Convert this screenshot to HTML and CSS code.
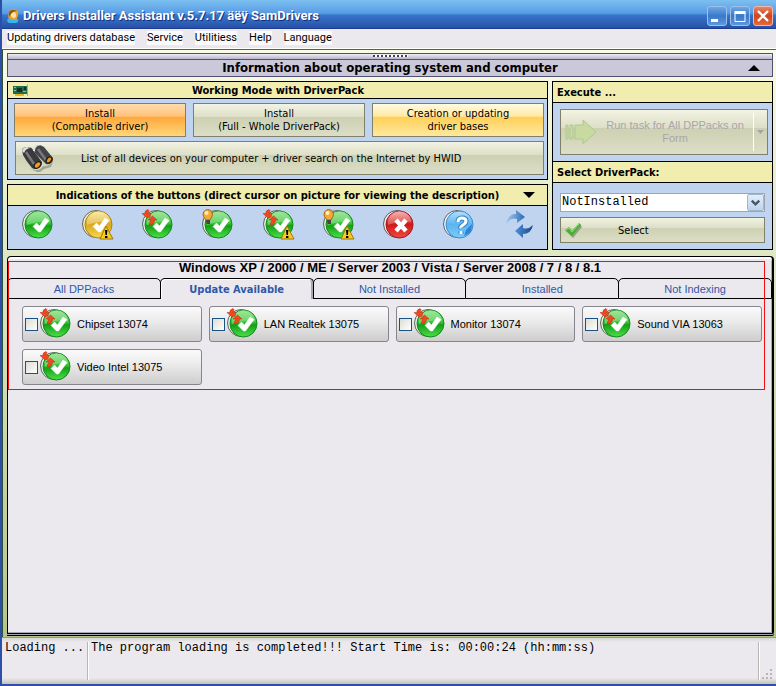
FILE: index.html
```html
<!DOCTYPE html>
<html lang="en">
<head>
    <meta charset="UTF-8">
    <meta name="viewport" content="width=device-width, initial-scale=1.0">
    <title>Drivers Installer Assistant</title>
    <link rel="stylesheet" href="styles.css">
</head>
<body>

<!-- shared icons -->
<svg class="defs" width="0" height="0">
    <defs>
        <linearGradient id="gGreen" x1="0" y1="0" x2="0" y2="1">
            <stop offset="0" stop-color="#7fe07a"/>
            <stop offset="0.45" stop-color="#3cc43a"/>
            <stop offset="0.55" stop-color="#12a016"/>
            <stop offset="1" stop-color="#4ee04a"/>
        </linearGradient>
        <linearGradient id="gGold" x1="0" y1="0" x2="0" y2="1">
            <stop offset="0" stop-color="#f7e27c"/>
            <stop offset="0.5" stop-color="#d9a91c"/>
            <stop offset="1" stop-color="#f5d850"/>
        </linearGradient>
        <linearGradient id="gRed" x1="0" y1="0" x2="0" y2="1">
            <stop offset="0" stop-color="#f49a94"/>
            <stop offset="0.5" stop-color="#cf1a1a"/>
            <stop offset="1" stop-color="#f04a40"/>
        </linearGradient>
        <linearGradient id="gBlue" x1="0" y1="0" x2="0" y2="1">
            <stop offset="0" stop-color="#b4e0fa"/>
            <stop offset="0.5" stop-color="#5cb4f0"/>
            <stop offset="1" stop-color="#7cccfa"/>
        </linearGradient>
        <linearGradient id="gArrowRight" x1="0" y1="0" x2="1" y2="0">
            <stop offset="0" stop-color="#a4cdf0"/>
            <stop offset="1" stop-color="#2a68b4"/>
        </linearGradient>
        <linearGradient id="gArrowLeft" x1="0" y1="0" x2="1" y2="0">
            <stop offset="0" stop-color="#4c90d8"/>
            <stop offset="1" stop-color="#1c4888"/>
        </linearGradient>
        <symbol id="ball-green" viewBox="0 0 32 32">
            <circle cx="14" cy="15" r="13.5" fill="#e4ece4" stroke="#5a6a5c"/>
            <circle cx="16.5" cy="15.5" r="13.5" fill="url(#gGreen)" stroke="#118a18"/>
            <path d="M5 14a11.5 11.5 0 0 1 23-1Q18 11 5 16z" fill="#fff" opacity=".25"/>
        </symbol>
        <symbol id="tick" viewBox="0 0 32 32">
            <path d="M11 17.500l3.500-3.500 3 3L23 9l4 2.500L18.500 23h-2z" fill="#fff" stroke="#fff" stroke-width=".5"/>
        </symbol>
        <symbol id="warn" viewBox="0 0 32 32">
            <path d="M24 17l7 13H18z" fill="#f6cc22" stroke="#a07808"/>
            <path d="M23 21h2.400l-.5 5h-1.400zM23 27h2.400v2H23z" fill="#000"/>
        </symbol>
        <symbol id="redo" viewBox="0 0 32 32">
            <path d="M5 9L0 4.500h3Q2 2 6 .5l1 1-1 3 3-.5-1 4z" fill="#f4481c" stroke="#b02c10" stroke-width=".5"/>
            <path d="M10.500 7l4.500 4-2.500 0q0 4-4.500 5l-1-1 2-4-3 0z" fill="#f4481c" stroke="#b02c10" stroke-width=".5"/>
        </symbol>
        <symbol id="bulb" viewBox="0 0 32 32">
            <path d="M5.500 .5a5 5 0 0 1 4.500 7L8 11H4L1.500 7.500A5 5 0 0 1 5.500 .5z" fill="#f4a838" stroke="#a8641c"/>
            <path d="M4 11h4v4H4.500z" fill="#444"/>
            <circle cx="4.500" cy="4" r="2" fill="#fff0b0"/>
        </symbol>
        <symbol id="ok" viewBox="0 0 32 32"><use href="#ball-green"/><use href="#tick"/></symbol>
        <symbol id="ok-update" viewBox="0 0 32 32"><use href="#ok"/><use href="#redo"/></symbol>
        <symbol id="ok-bulb" viewBox="0 0 32 32"><use href="#ok"/><use href="#bulb"/></symbol>
        <symbol id="ok-update-warn" viewBox="0 0 32 32"><use href="#ok-update"/><use href="#warn"/></symbol>
        <symbol id="ok-bulb-warn" viewBox="0 0 32 32"><use href="#ok-bulb"/><use href="#warn"/></symbol>
        <symbol id="gold-warn" viewBox="0 0 32 32">
            <circle cx="14" cy="15" r="13.5" fill="#f0ead0" stroke="#6a6450"/>
            <circle cx="16.500" cy="15.500" r="13.500" fill="url(#gGold)" stroke="#b08410"/>
            <path d="M5 14a11.500 11.500 0 0 1 23-1Q18 11 5 16z" fill="#fff" opacity=".3"/>
            <use href="#tick"/><use href="#warn"/>
        </symbol>
        <symbol id="error" viewBox="0 0 32 32">
            <circle cx="14" cy="15" r="13.5" fill="#eee" stroke="#5a5a5a"/>
            <circle cx="16.500" cy="15.500" r="13.500" fill="url(#gRed)" stroke="#a81414"/>
            <path d="M5 14a11.500 11.500 0 0 1 23-1Q18 11 5 16z" fill="#fff" opacity=".25"/>
            <path d="M13 11l10 11M23 11L13 22" stroke="#fff" stroke-width="4.500"/>
        </symbol>
        <symbol id="help" viewBox="0 0 32 32">
            <circle cx="14" cy="15" r="13.5" fill="#eee" stroke="#5a6470"/>
            <circle cx="16.500" cy="15.500" r="13.500" fill="url(#gBlue)" stroke="#3a8cd0"/>
            <path d="M21 27l2-6 6-6-1 8z" fill="#2c84d4"/>
            <path d="M15 13q0-4 4-4t4 3q0 2-3 4t-2 3M18 22v3" fill="none" stroke="#2a80cc" stroke-width="5"/>
            <path d="M15 13q0-4 4-4t4 3q0 2-3 4t-2 3M18 22v3" fill="none" stroke="#fff" stroke-width="3"/>
        </symbol>
        <symbol id="refresh" viewBox="0 0 32 32">
            <path d="M3 15Q5 5 13 5V1l9 7-8 6v-4Q8 8 3 15z" fill="url(#gArrowRight)"/>
            <path d="M30 16q-2 9-10 9v4l-8-7 8-7v4q5 2 10-3z" fill="url(#gArrowLeft)"/>
        </symbol>
    </defs>
</svg>

<div class="window">
    <header class="titlebar">
        <svg class="app-icon" viewBox="0 0 14 16">
            <path d="M1 12q2-3 5-2t6 1q1 3-2 4H3q-2-1-2-3z" fill="#3ab4ec"/>
            <path d="M3 4q2-4 6-3t3 6-3 5-5-1-1-7z" fill="#e8a42c"/>
            <path d="M7 4q3 0 3 3t-2 3-3-2 2-4z" fill="#fbe2b0"/>
            <path d="M3 4q3-4 8-1Q7 3 5 6t-1 4Q2 7 3 4z" fill="#8c5c14"/>
        </svg>
        <h1>Drivers Installer Assistant v.5.7.17 äëÿ SamDrivers</h1>
        <div class="window-buttons">
            <button type="button" class="win-btn" aria-label="Minimize">
                <svg viewBox="0 0 18 18"><path d="M3 12h7v3H3z" fill="#fff"/></svg>
            </button>
            <button type="button" class="win-btn" aria-label="Maximize">
                <svg viewBox="0 0 18 18"><path d="M4 5.500h10v9H4zM4 4.500h10" fill="none" stroke="#fff"/><path d="M3.500 4h11v3h-11z" fill="#fff"/></svg>
            </button>
            <button type="button" class="win-btn win-close" aria-label="Close">
                <svg viewBox="0 0 18 18"><path d="M4 4l10 10M14 4L4 14" stroke="#fff" stroke-width="2.400"/></svg>
            </button>
        </div>
    </header>

    <nav class="menu">
        <a href="#">Updating drivers database</a>
        <a href="#">Service</a>
        <a href="#">Utilitiess</a>
        <a href="#">Help</a>
        <a href="#">Language</a>
    </nav>

    <main class="main">
        <section class="info-bar">
            <div class="grip"><span></span></div>
            <div class="info-title">
                <h2>Information about operating system and computer</h2>
                <svg class="tri" viewBox="0 0 12 6"><path d="M0 6l6-6 6 6z"/></svg>
            </div>
        </section>

        <div class="top">
            <div class="top-left">
                <section class="panel">
                    <div class="panel-head">
                        <svg class="card-icon" viewBox="0 0 16 13">
                            <path d="M0 2h14v8H0z" fill="#1f6a48"/>
                            <path d="M4 4h5v4H4zM11 3h2v3h-2z" fill="#1c2a24"/>
                            <path d="M1 3h2v1H1zM1 6h2v1H1zM10 7h3v1h-3z" fill="#7cc49c"/>
                            <path d="M2 10h9v2H2z" fill="#e8b420"/>
                            <path d="M14 1l1-1v12h-1z" fill="#a0a8b0"/>
                        </svg>
                        <h2>Working Mode with DriverPack</h2>
                    </div>
                    <div class="panel-body modes">
                        <button type="button" class="btn btn-orange">Install<br>(Compatible driver)</button>
                        <button type="button" class="btn">Install<br>(Full - Whole DriverPack)</button>
                        <button type="button" class="btn btn-yellow">Creation or updating<br>driver bases</button>
                        <button type="button" class="btn btn-wide">
                            <svg class="binoculars" viewBox="0 0 32 28">
                                <path d="M8 24q10 5 14-2 6 1 10-5l-2 6-7 2-5 4z" fill="#80807a" opacity=".6"/>
                                <path d="M1 6q1-3 5-3 5 0 6 3l9 12q0 4-3 6-4 2-7 0Q5 17 2 11z" fill="#3a3a3e"/>
                                <path d="M13 4q2-3 6-3l4 2 9 11q0 4-2 5-3 2-5 1L14 9z" fill="#444448"/>
                                <path d="M5 8l8 12M17 5l8 11" stroke="#77777c" stroke-width="2.500" fill="none"/>
                                <path d="M1 7q1-4 5-4l4 1Q5 4 3 9zM12 4q3-4 8-2l-3 0q-3 1-3 5l-2 0z" fill="#e0e0e4"/>
                                <ellipse cx="16.500" cy="21" rx="4.500" ry="3" transform="rotate(-42 16.500 21)" fill="#1c1c1e"/>
                                <ellipse cx="16.500" cy="21" rx="3.200" ry="1.900" transform="rotate(-42 16.500 21)" fill="#f09c14"/>
                                <ellipse cx="28" cy="16" rx="4" ry="3" transform="rotate(-50 28 16)" fill="#1c1c1e"/>
                                <ellipse cx="28" cy="16" rx="2.800" ry="1.700" transform="rotate(-50 28 16)" fill="#f09c14"/>
                            </svg>
                            <span>List of all devices on your computer + driver search on the Internet by HWID</span>
                        </button>
                    </div>
                </section>

                <section class="panel panel-grow">
                    <div class="panel-head panel-head-tall">
                        <h2>Indications of the buttons (direct cursor on picture for viewing the description)</h2>
                        <svg class="tri" viewBox="0 0 12 6"><path d="M0 0l6 6 6-6z"/></svg>
                    </div>
                    <div class="panel-body indications">
                        <svg class="ind"><use href="#ok"/></svg>
                        <svg class="ind"><use href="#gold-warn"/></svg>
                        <svg class="ind"><use href="#ok-update"/></svg>
                        <svg class="ind"><use href="#ok-bulb"/></svg>
                        <svg class="ind"><use href="#ok-update-warn"/></svg>
                        <svg class="ind"><use href="#ok-bulb-warn"/></svg>
                        <svg class="ind"><use href="#error"/></svg>
                        <svg class="ind"><use href="#help"/></svg>
                        <svg class="ind"><use href="#refresh"/></svg>
                    </div>
                </section>
            </div>

            <section class="panel top-right">
                <div class="panel-head panel-head-side"><h2>Execute ...</h2></div>
                <div class="panel-body execute">
                    <button type="button" class="btn btn-run" disabled>
                        <svg class="run-arrow" viewBox="0 0 32 26">
                            <path d="M1 6h2v14H1zM5 6h3v14H5zM10 6h8V1l13 12-13 12v-5h-8z" fill="#c9daa0" stroke="#b0c890"/>
                        </svg>
                        <span class="run-text">Run task for All DPPacks on Form</span>
                        <span class="run-drop"><svg viewBox="0 0 7 4"><path d="M0 0h7L3.500 4z" fill="#a4a2a8"/></svg></span>
                    </button>
                </div>
                <div class="panel-head panel-head-side panel-head-mid"><label for="pack">Select DriverPack:</label></div>
                <div class="panel-body choose">
                    <div class="combo">
                        <select id="pack">
                            <option>NotInstalled</option>
                        </select>
                        <svg class="combo-arrow" viewBox="0 0 16 16"><path d="M4 6l4 4 4-4" fill="none" stroke="#48586c" stroke-width="2.500"/></svg>
                    </div>
                    <button type="button" class="btn btn-select">
                        <svg class="check" viewBox="0 0 18 16">
                            <path d="M2 9l4-3 3 4 7-8 2 3-9 11z" fill="#9a9a90"/>
                            <path d="M1 8l4-3 3 4 7-8 2 2-9 11z" fill="#48b030"/>
                            <path d="M2 8l3-2 3 4 7-8" fill="none" stroke="#90e070"/>
                        </svg>
                        <span>Select</span>
                    </button>
                </div>
            </section>
        </div>

        <section class="packs">
            <div class="pack-area">
                <h2>Windows XP / 2000 / ME / Server 2003 / Vista / Server 2008 / 7 / 8 / 8.1</h2>
                <div class="tabs" role="tablist">
                    <button type="button" class="tab" role="tab">All DPPacks</button>
                    <button type="button" class="tab active" role="tab">Update Available</button>
                    <button type="button" class="tab" role="tab">Not Installed</button>
                    <button type="button" class="tab" role="tab">Installed</button>
                    <button type="button" class="tab" role="tab">Not Indexing</button>
                </div>
                <div class="cards">
                    <label class="card"><input type="checkbox"><svg><use href="#ok-update"/></svg>Chipset 13074</label>
                    <label class="card"><input type="checkbox"><svg><use href="#ok-update"/></svg>LAN Realtek 13075</label>
                    <label class="card"><input type="checkbox"><svg><use href="#ok-update"/></svg>Monitor 13074</label>
                    <label class="card"><input type="checkbox"><svg><use href="#ok-update"/></svg>Sound VIA 13063</label>
                    <label class="card"><input type="checkbox"><svg><use href="#ok-update"/></svg>Video Intel 13075</label>
                </div>
                <div class="frame"></div>
            </div>
        </section>
    </main>

    <footer class="status">
        <div class="status-cell status-state">Loading ...</div>
        <div class="status-cell status-text">The program loading is completed!!! Start Time is: 00:00:24 (hh:mm:ss)</div>
        <svg class="grip-corner" viewBox="0 0 12 12"><path d="M9 1h2v2H9zM9 5h2v2H9zM5 5h2v2H5zM9 9h2v2H9zM5 9h2v2H5zM1 9h2v2H1z" fill="#b8b6b2"/></svg>
    </footer>
</div>

</body>
</html>
```

FILE: styles.css
```css
* {
    box-sizing: border-box;
}
body {
    margin: 0;
    font-family: "DejaVu Sans Condensed", "Noto Sans", sans-serif;
    font-size: 11px;
    color: #000;
}
h1, h2 {
    margin: 0;
    font-size: 11px;
    font-weight: bold;
}
button, select, input {
    font: inherit;
    color: inherit;
    margin: 0;
}
.defs {
    position: absolute;
}
.window {
    display: flex;
    flex-direction: column;
    min-height: 100vh;
    border: solid #2c50a8;
    border-width: 0 0 2px 2px;
    background: #ebe9ed;
}

/* title bar */
.titlebar {
    display: flex;
    align-items: center;
    gap: 3px;
    height: 29px;
    padding: 3px 3px 0 4px;
    background: linear-gradient(#7cc0f0 0, #74b8ee 3px, #5c9fe6 12px, #4f94e0 14px, #3676c8 15px, #2f62b8 22px, #2850a8 28px);
    border-bottom: 1px solid #1c3c90;
}
.app-icon {
    width: 14px;
    height: 16px;
}
.titlebar h1 {
    flex: 1;
    font-family: Roboto, "Open Sans", sans-serif;
    font-size: 13px;
    line-height: 16px;
    color: #fff;
    text-shadow: 1px 1px 0 #14307c;
}
.window-buttons {
    display: flex;
    gap: 3px;
}
.win-btn {
    width: 20px;
    height: 20px;
    padding: 0;
    border: 1px solid #9cc0ec;
    border-radius: 3px;
    background: linear-gradient(#6ea8e4, #3a78cc 50%, #5c98dc);
}
.win-btn svg {
    display: block;
    width: 18px;
    height: 18px;
}
.win-close {
    border-color: #f0b8a8;
    background: linear-gradient(#e88464, #d0441c 50%, #e8683c);
}

/* menu */
.menu {
    display: flex;
    gap: 12px;
    height: 21px;
    padding: 2px 5px;
    border-bottom: 1px solid #4a6848;
    box-shadow: inset 0 -1px #fff;
    font-family: Roboto, "Open Sans", sans-serif;
}
.menu a {
    height: 14px;
    line-height: 14px;
    background: #fbfafc;
    color: #000;
    text-decoration: none;
}

.main {
    flex: 1;
    display: flex;
    flex-direction: column;
    padding: 3px 2px 2px 4px;
    border-left: 1px solid #2f5040;
    background: linear-gradient(#fafbe6, #dfe7c5 35%, #b4c488);
}

/* system information bar */
.info-bar {
    margin: 0 1px 4px 0;
    border: 1px solid #505074;
    background: #cbc9d9;
}
.grip {
    display: flex;
    justify-content: center;
    height: 6px;
    padding-top: 1px;
    border-bottom: 1px solid #505074;
    background: linear-gradient(#eeedf4, #b8b6cc);
}
.grip span {
    width: 35px;
    height: 2px;
    background: repeating-linear-gradient(90deg, #404058 0, #404058 2px, #fff 2px, #fff 4px);
}
.info-title {
    display: flex;
    align-items: center;
    height: 16px;
    padding: 0 12px 0 24px;
}
.info-title h2 {
    flex: 1;
    font-size: 13px;
    line-height: 16px;
    text-align: center;
}
.tri {
    width: 12px;
    height: 6px;
}

/* panels */
.top {
    display: grid;
    grid-template-columns: 541fr 221fr;
    gap: 4px;
    margin: 0 1px 6px 0;
}
.top-left {
    display: flex;
    flex-direction: column;
    gap: 4px;
}
.top-right {
    display: flex;
    flex-direction: column;
}
.panel {
    border: 1px solid #000;
    background: #c0d3ef;
}
.panel-grow {
    flex: 1;
}
.panel-head {
    display: flex;
    align-items: center;
    height: 17px;
    padding: 0 20px 0 5px;
    border-bottom: 1px solid #000;
    background: #f1edae;
}
.panel-head h2 {
    flex: 1;
    text-align: center;
}
.panel-head-tall {
    height: 21px;
    padding: 0 12px 0 24px;
}
.panel-head-side {
    height: 21px;
    padding: 0 4px;
    font-weight: bold;
}
.panel-head-side h2 {
    text-align: left;
}
.panel-head-mid {
    border-top: 1px solid #000;
    height: 22px;
}
.card-icon {
    width: 16px;
    height: 13px;
}

/* buttons */
.btn {
    padding: 0;
    border: 1px solid #80806a;
    background: linear-gradient(#f2f3e2, #dddfc8 40%, #cdd0b2 42%, #dcdfc6);
    line-height: 13px;
    text-align: center;
}
.btn-orange {
    background: linear-gradient(#ffdcae, #ffc27a 38%, #ffa83c 42%, #ffd87a);
}
.btn-yellow {
    background: linear-gradient(#fffbe0, #ffeaa4 38%, #ffd058 42%, #ffe9a0);
}
.modes {
    display: grid;
    grid-template-columns: repeat(3, 1fr);
    gap: 4px 7px;
    padding: 4px 3px 4px 6px;
}
.modes .btn {
    height: 34px;
}
.modes .btn-wide {
    grid-column: 1 / -1;
    display: flex;
    align-items: center;
    margin-left: 1px;
}
.binoculars {
    width: 32px;
    height: 28px;
    margin: 0 28px 0 5px;
}
.indications {
    display: flex;
    justify-content: space-between;
    padding: 3px 12px 0 14px;
}
.ind {
    width: 32px;
    height: 32px;
}
.execute {
    padding: 6px 4px 6px 7px;
}
.btn-run {
    display: flex;
    align-items: center;
    width: 100%;
    height: 46px;
    color: #a8a6ac;
    font-family: "Liberation Sans", Arial, sans-serif;
}
.run-arrow {
    width: 32px;
    height: 26px;
    margin-left: 4px;
}
.run-text {
    flex: 1;
    padding: 0 8px;
}
.run-drop {
    display: flex;
    align-items: center;
    width: 14px;
    height: 38px;
    padding-left: 3px;
    border-left: 1px solid #fff;
}
.run-drop svg {
    width: 7px;
    height: 4px;
}
.choose {
    display: flex;
    flex-direction: column;
    gap: 5px;
    padding: 10px 7px 6px 7px;
}
.combo {
    display: flex;
    align-items: center;
    height: 19px;
    border: 1px solid #a0a4ac;
    background: #fff;
}
.combo select {
    flex: 1;
    align-self: stretch;
    margin-right: -17px;
    padding: 0 18px 2px 1px;
    border: 0;
    appearance: none;
    background: transparent;
    font-family: "Liberation Mono", monospace;
    font-size: 12px;
}
.combo-arrow {
    width: 17px;
    height: 17px;
    border: 1px solid #a0b8cc;
    border-radius: 2px;
    background: linear-gradient(#e4eefa, #bcd4ee);
    pointer-events: none;
}
.btn-select {
    display: flex;
    align-items: center;
    height: 26px;
}
.check {
    width: 18px;
    height: 16px;
    margin: 0 36px 0 3px;
}

/* driver packs */
.packs {
    flex: 1;
    margin-bottom: 1px;
    border: 1px solid #000;
    border-right-width: 2px;
    border-radius: 4px 4px 2px 0;
    background: #ebe9ed;
    box-shadow: inset 0 2px #fff, inset -1px 0 #a8a6b0, inset 0 -1px #a8a6b0, 0 1px #a8a6b0, 0 2px #000;
}
.pack-area {
    position: relative;
    padding-top: 4px;
}
.pack-area h2 {
    font-family: "Liberation Sans", Arial, sans-serif;
    font-size: 13px;
    line-height: 14px;
    padding-bottom: 3px;
    text-align: center;
}
.frame {
    position: absolute;
    inset: 4px 7px 0 0;
    border: 1px solid #f01010;
    pointer-events: none;
}
.tabs {
    display: flex;
    margin-left: -1px;
}
.tab {
    flex: 1 1 0;
    height: 21px;
    margin-right: -1px;
    padding: 0;
    border: 1px solid #000;
    border-radius: 5px 5px 0 0;
    background: #ebe9ed;
    color: #3058a8;
    font-family: "Liberation Sans", Arial, sans-serif;
    font-size: 11px;
}
.tab:last-child {
    margin-right: 0;
}
.tab.active {
    border-bottom: 0;
    box-shadow: inset 1px 1px #fff, inset -2px 0 #a8a6b0;
    font-family: "DejaVu Sans Condensed", "Noto Sans", sans-serif;
    font-weight: bold;
}
.cards {
    display: grid;
    grid-template-columns: repeat(4, 1fr);
    gap: 7px;
    padding: 7px 10px 5px 14px;
}
.card {
    display: flex;
    align-items: center;
    height: 36px;
    padding-left: 2px;
    border: 1px solid #86848c;
    border-radius: 3px;
    background: linear-gradient(#fafafa, #ececec 40%, #cdcdcd);
    font-family: "Liberation Sans", Arial, sans-serif;
    font-size: 11px;
}
.card input {
    appearance: none;
    width: 13px;
    height: 13px;
    border: 1px solid #1c5180;
    background: linear-gradient(135deg, #dcdcd6, #fff);
}
.card svg {
    width: 32px;
    height: 32px;
    margin: 0 5px 0 2px;
}

/* status bar */
.status {
    display: flex;
    height: 47px;
    padding: 4px 3px;
    border-top: 1px solid #8c9c98;
    background: linear-gradient(#d8d6d4, #ebe9ed 4px, #ebe9ed 40px, #c4c2b8);
    font-family: "Liberation Mono", monospace;
    font-size: 12px;
    line-height: 12px;
}
.status-cell {
    border-right: 1px solid #b8b6b2;
    box-shadow: 1px 0 #fff;
}
.status-state {
    width: 83px;
}
.status-text {
    flex: 1;
    padding-left: 3px;
}
.grip-corner {
    width: 12px;
    height: 12px;
    margin-left: 2px;
    align-self: flex-end;
}
```
